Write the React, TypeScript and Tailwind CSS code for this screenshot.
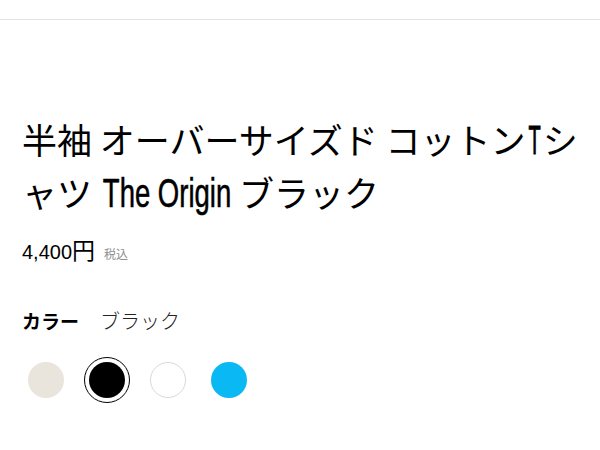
import React from "react";

const tall = "inline-block leading-none whitespace-nowrap origin-[50%_85%] font-['Liberation_Sans','Arial',sans-serif]";

export default function App() {
  const swatches = [
    { color: "bg-[#e9e5dc]", border: "", selected: false, label: "ベージュ" },
    { color: "bg-black", border: "", selected: true, label: "ブラック" },
    { color: "bg-white", border: "border border-[#d9d9d9]", selected: false, label: "ホワイト" },
    { color: "bg-[#0ab8f4]", border: "", selected: false, label: "ブルー" },
  ];
  return (
    <div className="w-[600px] h-[450px] bg-white overflow-hidden font-['Noto_Sans_CJK_JP',sans-serif] text-black">
      <div className="h-[20px] border-b border-[#e3e3e3]" />
      <div className="pl-[22px] pr-[8px]">
        <h1 className="mt-[92px] text-[35px] leading-[53px] font-normal">
          <span>半袖 オーバーサイズド コットン</span>
          <span className={`${tall} text-[20px] ml-[3px] mr-[2px] scale-y-[2] [-webkit-text-stroke:0.5px_black]`}>T</span>
          <span>シ</span>
          <span>ャツ </span>
          <span className={`${tall} text-[27.5px] ml-[3px] scale-y-[1.47] [-webkit-text-stroke:0.4px_black]`}>The Origin</span>
          <span> ブラック</span>
        </h1>
        <div className="mt-[16px] flex items-baseline gap-[9px]">
          <span className="leading-[30px]">
            <span className={`${tall} text-[20px] scale-y-[1.05]`}>4,400</span>
            <span className="text-[23px]">円</span>
          </span>
          <span className="text-[12px] text-[#8f8f8f]">税込</span>
        </div>
        <div className="mt-[40px] flex items-center gap-[21px] h-[28px]">
          <span className="text-[19px] font-bold">カラー</span>
          <span className="text-[20px] font-light text-[#222]">ブラック</span>
        </div>
        <div className="mt-[27px] flex items-center gap-[25px] pl-[6px]">
          {swatches.map((s) => (
            <button
              key={s.label}
              aria-label={s.label}
              className={`w-[36px] h-[36px] rounded-full ${s.color} ${s.border} ${s.selected ? "outline outline-[1.5px] outline-black outline-offset-[4px]" : ""}`}
            />
          ))}
        </div>
      </div>
    </div>
  );
}
